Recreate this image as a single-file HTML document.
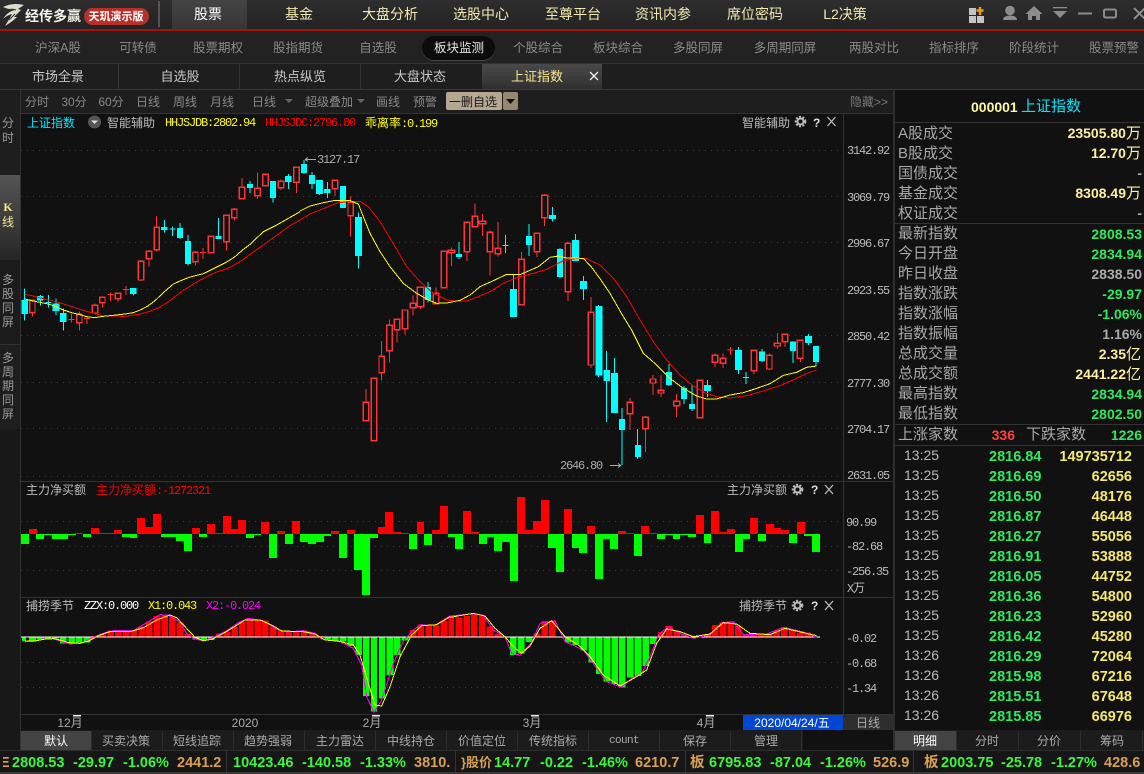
<!DOCTYPE html>
<html><head><meta charset="utf-8"><style>
html,body{margin:0;padding:0;width:1144px;height:774px;overflow:hidden;background:#111}
body{position:relative;font-family:"Liberation Sans","WenQuanYi Zen Hei","Noto Sans CJK SC",sans-serif;font-size:12px;color:#aaa}
.b{position:absolute}
.t{position:absolute;white-space:nowrap;line-height:16px;height:16px;margin-top:1px}
.c{transform:translateX(-50%)}
.r{transform:translateX(-100%)}
.m{font-family:"Liberation Mono","WenQuanYi Zen Hei",monospace;font-size:12px;letter-spacing:-1.2px}
.m i{font-style:normal;font-family:"Liberation Sans","WenQuanYi Zen Hei",sans-serif;letter-spacing:0}
.n{color:#f3e8b0;font-size:14px;margin-top:0}
.s{color:#8a8a8a;font-size:12.500px;margin-top:0}
.tb{color:#c8c8c8;font-size:13px}
.bar{color:#888}
.p{font-size:15px;color:#a8a8a8}
.v{font-size:14px;font-weight:bold;margin-top:0}
.g{color:#30e860}.y{color:#fff0a0}.a{color:#aaa}
.tk{font-size:14.500px;font-weight:bold;top:755px;margin-top:0}
.tg{color:#3cf53c}.to{color:#d8a050}
.x{color:#aaa;font-size:12px;top:732px}
.tm{left:904px;color:#bbb;font-weight:normal}
.pr{left:989px;font-size:14.500px;color:#30e860}
.vo{left:1132px;font-size:14.500px;color:#f5e86a;transform:translateX(-100%)}
svg{position:absolute;left:0;top:0}
.cr{shape-rendering:crispEdges}
</style></head><body>
<div class="b" style="left:0;top:0;width:1144px;height:29px;background:linear-gradient(#2e2e2e,#232323)"></div>
<div class="b" style="left:172px;top:0;width:75px;height:29px;background:linear-gradient(#444,#363636)"></div>
<div class="b" style="left:158px;top:1px;width:2px;height:26px;background:#555"></div>
<div class="b" style="left:0;top:29px;width:1144px;height:2px;background:#a51208"></div>
<div class="b" style="left:0;top:31px;width:1144px;height:32px;background:#222"></div>
<div class="b" style="left:0;top:63px;width:1144px;height:1px;background:#333"></div>
<div class="b" style="left:0;top:64px;width:1144px;height:25px;background:#1e1e1e"></div>
<div class="b" style="left:0;top:89px;width:1144px;height:1px;background:#3a3a3a"></div>
<div class="b" style="left:118px;top:64px;width:1px;height:25px;background:#333"></div>
<div class="b" style="left:239px;top:64px;width:1px;height:25px;background:#333"></div>
<div class="b" style="left:360px;top:64px;width:1px;height:25px;background:#333"></div>
<div class="b" style="left:482px;top:64px;width:120px;height:25px;background:linear-gradient(#4a4a4a,#303030)"></div>
<div class="b" style="left:422px;top:36px;width:73px;height:24px;border-radius:12px;background:#0c0c0c;box-shadow:0 1px 0 #444"></div>
<div class="b" style="left:21px;top:90px;width:873px;height:23px;background:#1e1e1e"></div>
<div class="b" style="left:21px;top:113px;width:873px;height:1px;background:#333"></div>
<div class="b" style="left:0;top:90px;width:20px;height:660px;background:#181818"></div>
<div class="b" style="left:0;top:90px;width:20px;height:85px;background:#1e1e1e"></div>
<div class="b" style="left:0;top:175px;width:20px;height:85px;background:linear-gradient(#555,#262626)"></div>
<div class="b" style="left:0;top:260px;width:20px;height:84px;background:#1c1c1c"></div>
<div class="b" style="left:0;top:344px;width:20px;height:85px;background:#1e1e1e;border-top:1px solid #333;box-sizing:border-box"></div>
<div class="b" style="left:20px;top:90px;width:1px;height:660px;background:#333"></div>
<div class="b" style="left:843px;top:114px;width:1px;height:600px;background:#333"></div>
<div class="b" style="left:893px;top:90px;width:2px;height:660px;background:#2e2e2e"></div>
<div class="b" style="left:21px;top:481px;width:872px;height:1px;background:#333"></div>
<div class="b" style="left:21px;top:597px;width:872px;height:1px;background:#333"></div>
<div class="b" style="left:21px;top:714px;width:872px;height:1px;background:#333"></div>
<div class="b" style="left:895px;top:122px;width:249px;height:1px;background:#333"></div>
<div class="b" style="left:895px;top:223px;width:249px;height:1px;background:#333"></div>
<div class="b" style="left:895px;top:424px;width:249px;height:1px;background:#333"></div>
<div class="b" style="left:895px;top:445px;width:249px;height:1px;background:#333"></div>
<div class="b" style="left:743px;top:715px;width:100px;height:15px;background:#0047d6"></div>
<div class="b" style="left:843px;top:715px;width:50px;height:15px;background:#2e2e2e"></div>
<div class="b" style="left:21px;top:730px;width:782px;height:20px;background:#1c1c1c"></div>
<div class="b" style="left:21px;top:731px;width:70px;height:19px;background:#444"></div>
<div class="b" style="left:895px;top:730px;width:249px;height:20px;background:#1c1c1c"></div>
<div class="b" style="left:895px;top:731px;width:61px;height:19px;background:#444"></div>
<div class="b" style="left:0;top:750px;width:1144px;height:22px;background:#161616;border-top:1px solid #2c2c2c;box-sizing:border-box"></div>
<div class="b" style="left:0;top:772px;width:1144px;height:2px;background:#3a3a3a"></div>
<div class="b" style="left:226px;top:751px;width:1px;height:21px;background:#333"></div>
<div class="b" style="left:455px;top:751px;width:1px;height:21px;background:#333"></div>
<div class="b" style="left:685px;top:751px;width:1px;height:21px;background:#333"></div>
<div class="b" style="left:913px;top:751px;width:1px;height:21px;background:#333"></div>
<div class="b" style="left:91px;top:731px;width:712px;height:19px;background:repeating-linear-gradient(90deg,#2e2e2e 0,#2e2e2e 1px,transparent 1px,transparent 71px)"></div>
<div class="b" style="left:956px;top:731px;width:188px;height:19px;background:repeating-linear-gradient(90deg,#2e2e2e 0,#2e2e2e 1px,transparent 1px,transparent 62px)"></div>

<svg width="1144" height="774" viewBox="0 0 1144 774">
<!-- logo -->
<path d="M3 7C9 4 17 3 24 5L18 9 21 10 14 17 17 17C14 20 10 23 5 26 8 21 10 18 12 14 9 15 6 16 3 19 6 14 10 11 15 10 11 9 7 9 3 7Z" fill="#dcdccc"/>
<path d="M5 11C9 9 13 9 16 10M9 20C11 18 13 16 15 14" stroke="#333" stroke-width="1" fill="none"/>
<rect x="84" y="8" width="65" height="17" rx="8.500" fill="#b8302c"/>
<!-- window icons -->
<g fill="#c4c4c4"><rect x="969" y="8" width="7" height="7"/><rect x="969" y="16" width="7" height="7"/><rect x="977" y="16" width="7" height="7"/></g>
<path d="M980 7v8M976.500 10.500h7" stroke="#f29a10" stroke-width="2.400"/>
<g fill="#8c8c8c"><circle cx="1010" cy="10.500" r="4.800"/><path d="M1003 20c0-3 3-4.500 7-4.500s7 1.500 7 4.500z"/>
<path d="M1034 6l8.500 8H1040v6h-4v-4h-4v4h-4v-6h-2.500z"/>
<rect x="1053" y="7" width="14" height="1.300"/><path d="M1053 11h14l-7 7z"/>
<rect x="1078" y="12.500" width="14" height="2"/></g>
<rect x="1104" y="9.500" width="12" height="8" rx="1.500" fill="none" stroke="#8c8c8c" stroke-width="2"/>
<path d="M1134 8l11 11M1145 8l-11 11" stroke="#8c8c8c" stroke-width="2"/>
<path d="M590 72l8 8M598 72l-8 8" stroke="#eee" stroke-width="1.300"/>
<!-- toolbar arrows -->
<path d="M285 99h8l-4 4z M357 99h8l-4 4z" fill="#666"/>
<rect x="446" y="92" width="56" height="18" rx="2" fill="#b5a792"/>
<rect x="503" y="92" width="15" height="18" rx="2" fill="#96886f"/>
<path d="M506 99h9l-4.500 5z" fill="#111"/>
<circle cx="94.500" cy="122" r="6.500" fill="#555"/><path d="M91 120.500h7l-3.500 3.500z" fill="#ddd"/>
<!-- grids -->
<g stroke="#3a3a3a" stroke-width="1" stroke-dasharray="1 5">
<path d="M21 150.500H842M21 196.500H842M21 242.500H842M21 289.500H842M21 335.500H842M21 382.500H842M21 428.500H842M21 476.500H842M21 521.500H842M21 546.500H842M21 570.500H842M21 662.500H842M21 687.500H842"/>
</g>
<!-- panel 2 bars -->
<g class="cr" transform="translate(0,480) scale(.33333)">
<path fill="#00ff00" d="M63 162H87V192H63zM108 162H132V177H108zM132 162H156V165H132zM156 162H180V177H156zM180 162H204V177H180zM204 162H228V165H204zM249 162H273V171H249zM366 162H390V171H366zM390 162H411V174H390zM483 162H507V171H483zM507 162H528V171H507zM528 162H552V183H528zM552 162H576V213H552zM597 162H621V171H597zM738 162H762V174H738zM762 162H783V165H762zM807 162H831V234H807zM855 162H879V192H855zM900 162H924V186H900zM924 162H948V192H924zM948 162H972V186H948zM972 162H993V168H972zM1017 162H1041V234H1017zM1062 162H1086V270H1062zM1086 162H1110V345H1086zM1110 162H1134V174H1110zM1227 162H1251V207H1227zM1272 162H1296V195H1272zM1344 162H1368V171H1344z"/>
<path fill="#ff0000" d="M87 162V147H111V162zM225 162V159H249V162zM273 162V144H297V162zM297 162V159H321V162zM321 162V159H342V162zM342 162V150H366V162zM411 162V114H435V162zM435 162V141H459V162zM459 162V102H483V162zM576 162V144H600V162zM621 162V132H645V162zM645 162V159H669V162zM669 162V108H693V162zM693 162V147H714V162zM714 162V120H738V162zM783 162V126H807V162zM831 162V153H855V162zM876 162V123H900V162zM993 162V153H1017V162zM1041 162V150H1065V162zM1134 162V141H1155V162zM1155 162V96H1179V162zM1179 162V156H1203V162zM1203 162V159H1227V162zM1251 162V126H1272V162zM1296 162V150H1320V162zM1320 162V78H1344V162z"/>
</g>
<g class="cr" transform="translate(450,480) scale(.33333)">
<path fill="#00ff00" d="M15 162H39V207H15zM87 162H111V192H87zM111 162H132V171H111zM132 162H156V213H132zM156 162H180V186H156zM180 162H204V303H180zM294 162H318V204H294zM318 162H342V276H318zM366 162H387V204H366zM387 162H411V219H387zM435 162H459V297H435zM459 162H480V177H459zM480 162H504V207H480zM552 162H576V228H552zM621 162H645V177H621zM645 162H669V165H645zM669 162H690V177H669zM690 162H714V165H690zM714 162H738V171H714zM762 162H783V189H762zM855 162H879V216H855zM879 162H900V177H879zM924 162H948V183H924zM1017 162H1041V189H1017zM1062 162H1086V168H1062zM1086 162H1110V216H1086z"/>
<path fill="#ff0000" d="M39 162V93H63V162zM63 162V156H87V162zM201 162V51H225V162zM225 162V150H249V162zM249 162V123H273V162zM273 162V60H297V162zM342 162V87H366V162zM411 162V138H435V162zM504 162V153H528V162zM528 162V159H552V162zM573 162V138H597V162zM597 162V159H621V162zM738 162V105H762V162zM783 162V93H807V162zM807 162V156H831V162zM831 162V147H855V162zM900 162V114H924V162zM948 162V132H972V162zM972 162V144H993V162zM993 162V150H1017V162zM1041 162V126H1065V162z"/>
</g>
<!-- panel 3 bars -->
<g class="cr" transform="translate(0,480) scale(.33333)">
<path fill="#00ff00" d="M66 471h12V483H66zM87 471h21V485H87zM110 471h22V478H110zM133 471h20V476H133zM157 471h20V475H157zM180 471h20V490H180zM205 471h20V492H205zM228 471h20V490H228zM250 471h22V487H250zM578 471h20V478H578zM601 471h20V482H601zM624 471h20V480H624zM973 471h20V480H973zM996 471h20V483H996zM1020 471h20V485H1020zM1043 471h20V498H1043zM1066 471h20V525H1066zM1089 471h20V648H1089zM1113 471h18V695H1113zM1137 471h18V655H1137zM1160 471h20V585H1160zM1182 471h20V525H1182zM1205 471h20V481H1205z"/>
<path fill="#ff0000" d="M275 468h20V471H275zM298 460h20V471H298zM322 452h20V471H322zM345 451h20V471H345zM368 451h20V471H368zM391 451h20V471H391zM415 440h20V471H415zM438 425h20V471H438zM461 408h20V471H461zM484 404h20V471H484zM507 410h20V471H507zM530 428h20V471H530zM553 462h22V471H553zM648 460h20V471H648zM671 455h20V471H671zM694 440h20V471H694zM717 425h20V471H717zM740 416h20V471H740zM763 418h20V471H763zM786 422h20V471H786zM810 440h20V471H810zM833 452h20V471H833zM856 455h20V471H856zM879 455h20V471H879zM903 452h20V471H903zM927 458h20V471H927zM950 468h20V471H950zM1230 450h20V471H1230zM1252 433h20V471H1252zM1276 434h20V471H1276zM1299 437h20V471H1299zM1322 421h20V471H1322zM1345 408h5V471H1345z"/>
</g>
<g class="cr" transform="translate(450,480) scale(.33333)">
<path fill="#00ff00" d="M180 471h20V525H180zM204 471h20V520H204zM228 471h20V486H228zM345 471h20V488H345zM368 471h20V495H368zM391 471h20V512H391zM415 471h20V548H415zM438 471h20V582H438zM461 471h20V605H461zM484 471h20V612H484zM507 471h20V622H507zM531 471h20V592H531zM554 471h20V588H554zM577 471h20V558H577zM600 471h20V492H600zM716 471h20V474H716z"/>
<path fill="#ff0000" d="M0 408h12V471H0zM17 412h20V471H17zM40 408h20V471H40zM63 402h20V471H63zM87 408h20V471H87zM110 440h20V471H110zM134 462h20V471H134zM251 460h20V471H251zM274 423h20V471H274zM297 421h20V471H297zM624 456h20V471H624zM647 438h20V471H647zM670 451h20V471H670zM693 464h20V471H693zM739 469h20V471H739zM763 462h20V471H763zM786 435h20V471H786zM809 427h20V471H809zM832 425h20V471H832zM855 436h20V471H855zM878 464h20V471H878zM901 462h20V471H901zM924 460h20V471H924zM947 460h20V471H947zM970 452h20V471H970zM993 441h20V471H993zM1017 450h20V471H1017zM1040 457h20V471H1040zM1063 458h20V471H1063zM1086 465h10V471H1086z"/>
</g>
<path class="cr" d="M21 637H820" stroke="#fff" stroke-width="1"/>
<!-- panel 3 lines -->
<g class="cr" transform="translate(0,480) scale(.33333)" fill="none" stroke-width="3">
<polyline stroke="#ff00ff" points="75,485 100,484 130,477 160,476 185,485 210,492 250,488 280,472 315,458 340,452 400,452 440,428 480,404 505,405 540,427 560,460 580,475 610,483 640,472 680,452 715,428 745,415 790,422 830,448 860,456 910,452 945,460 965,477 1020,485 1060,505 1085,555 1100,650 1122,697 1145,660 1180,550 1210,483 1240,450 1262,434 1305,436 1350,408"/>
<polyline stroke="#ffff00" points="75,483 105,483 130,478 160,476 180,480 205,488 240,490 265,483 300,465 330,455 395,454 430,443 470,420 510,405 530,413 555,440 585,472 610,482 635,478 670,460 700,442 735,420 780,420 815,435 845,453 910,455 945,462 975,480 1020,484 1060,495 1080,525 1105,610 1125,675 1145,678 1170,620 1200,530 1235,465 1265,437 1310,434 1350,410"/>
</g>
<g class="cr" transform="translate(450,480) scale(.33333)" fill="none" stroke-width="3">
<polyline stroke="#ff00ff" points="0,408 70,401 100,406 130,450 165,470 185,520 210,525 245,488 270,430 315,422 345,485 400,510 440,565 470,605 515,622 545,595 575,580 600,530 625,465 655,440 690,460 730,475 780,465 815,428 850,425 880,464 950,462 1000,442 1060,456 1100,473"/>
<polyline stroke="#ffff00" points="0,412 70,400 105,408 135,445 165,470 190,500 215,520 240,498 270,445 305,422 345,470 385,495 420,530 460,585 510,618 560,590 590,570 620,490 650,447 690,455 730,470 780,462 820,428 860,432 900,460 960,464 1005,445 1060,458 1100,467"/>
</g>
<!-- candles left -->
<g class="cr" transform="translate(0,130) scale(.33333)">
<path fill="none" stroke="#00ffff" stroke-width="3.300" d="M74 475V572M121 495V527M145 495V533M136 517H154M168 505V555M190 535V602M400 474V497M493 270V308M517 290V318M508 297H526M540 279V327M564 315V407M656 264V327M750 153V189M819 153V218M865 132V177"/>
<path fill="#00ffff" d="M64 510h20V552h-20zM111 498h20V512h-20zM158 520h20V543h-20zM180 549h20V576h-20zM390 474h20V492h-20zM483 291h20V300h-20zM531 294h18V324h-18zM555 333h18V402h-18zM647 318h18V327h-18zM741 162h18V174h-18zM810 153h18V204h-18zM855 138h20V156h-20z"/>
<path fill="none" stroke="#ff3333" stroke-width="3.300" d="M97 510V560M214 550V578M205 569H223M238 545V602M261 560V582M252 565H270M285 520V550M307 500V533M331 487V513M322 493H340M354 487V515M378 468V495M369 479H387M423 390V453M447 360V410M470 258V365M586 363V407M609 354V387M600 367H618M679 253V362M703 234V272M726 144V207M772 128V207M796 133V170M843 148V180M889 112V189"/>
<path fill="#111" stroke="#ff3333" stroke-width="3.600" d="M89 510h16V548h-16zM230 553h16V578h-16zM277 526h16V549h-16zM299 502h16V518h-16zM346 490h16V506h-16zM415 394h16V450h-16zM439 364h16V386h-16zM463 292h15V359h-15zM578 367h16V395h-16zM625 319h16V368h-16zM671 256h17V335h-17zM695 238h16V263h-16zM718 172h16V206h-16zM764 175h17V197h-17zM788 133h17V167h-17zM835 154h16V173h-16zM881 112h17V157h-17z"/>
<polyline fill="none" stroke="#ff0000" stroke-width="3" points="75,493 100,498 145,510 175,517 210,528 250,541 285,551 310,558 375,559 420,552 450,544 480,531 510,512 540,488 590,456 620,440 650,426 690,412 720,395 750,373 790,345 830,316 870,287 900,270"/>
<polyline fill="none" stroke="#ffff00" stroke-width="3" points="75,507 100,513 145,522 168,530 190,540 215,548 240,554 260,560 285,563 310,559 340,556 375,552 400,548 425,538 445,527 465,512 490,488 520,462 540,453 570,441 610,431 640,416 680,396 705,380 730,358 750,343 790,305 830,285 860,268 900,245"/>
</g>
<!-- candles middle -->
<g class="cr" transform="translate(300,130) scale(.33333)">
<path fill="none" stroke="#00ffff" stroke-width="3.300" d="M12 90V132M36 126V177M59 150V195M82 156V204M129 168V234M175 247V416M384 456V518M477 336V387M617 315V369M608 346H626M640 432V563M687 282V378M757 231V275M780 354V444M826 312V393M850 438V510M896 525V741"/>
<path fill="#00ffff" d="M3 102h18V129h-18zM27 135h18V162h-18zM48 150h21V192h-21zM72 177h20V189h-20zM120 168h18V234h-18zM165 261h21V378h-21zM375 471h18V510h-18zM468 372h18V381h-18zM630 477h21V561h-21zM678 318h18V345h-18zM747 255h21V267h-21zM771 357h18V441h-18zM816 330h21V393h-21zM840 453h21V477h-21zM887 528h20V736h-20z"/>
<path fill="none" stroke="#ff3333" stroke-width="3.300" d="M105 176V198M152 200V320M198 777V872M245 633V752M268 568V698M291 599V638M315 596V614M339 496V557M361 530V537M408 472V524M454 352V408M501 365V393M525 220V293M547 252V318M570 301V437M594 276V380M664 366V390M711 365V381M734 192V288M804 334V513M873 501V714"/>
<path fill="#111" stroke="#ff3333" stroke-width="3.600" d="M97 151h16V176h-16zM144 217h16V257h-16zM190 817h16V872h-16zM214 745h16V932h-16zM237 679h16V728h-16zM260 586h17V662h-17zM283 568h16V599h-16zM307 540h16V596h-16zM331 520h16V533h-16zM352 472h19V530h-19zM400 490h16V521h-16zM424 364h16V473h-16zM445 361h19V368h-19zM493 277h16V365h-16zM517 259h16V290h-16zM538 274h19V281h-19zM562 307h16V365h-16zM586 355h16V371h-16zM656 388h17V524h-17zM703 310h16V365h-16zM725 196h18V263h-18zM796 340h16V485h-16zM865 547h16V705h-16z"/>
<polyline fill="none" stroke="#ff0000" stroke-width="3" points="0,270 30,252 70,236 110,220 140,215 180,214 205,230 240,275 270,325 300,375 320,410 360,455 400,490 440,510 470,513 500,513 530,502 570,485 610,460 650,443 700,430 740,418 790,392 830,385 860,386 900,405"/>
<polyline fill="none" stroke="#ffff00" stroke-width="3" points="0,243 30,228 70,218 100,212 150,212 175,222 190,260 210,310 240,365 270,410 310,460 350,490 385,510 410,520 440,519 480,511 510,495 540,470 580,452 620,433 660,434 715,410 750,382 775,378 800,384 850,385 875,412 900,446"/>
</g>
<!-- candles right -->
<g class="cr" transform="translate(600,130) scale(.33333)">
<path fill="none" stroke="#00ffff" stroke-width="3.300" d="M20 663V876M43 684V849M66 834V1005M113 897V987M207 702V768M252 768V822M276 765V843M322 750V801M415 651V732M438 726V762M429 742H447M486 657V696M579 634V699M625 612V645M648 648V708"/>
<path fill="#00ffff" d="M10 720h20V753h-20zM33 729h21V849h-21zM57 867h18V900h-18zM105 945h18V981h-18zM198 726h18V765h-18zM243 774h18V807h-18zM267 822h18V837h-18zM312 765h21V783h-21zM405 660h21V720h-21zM477 664h18V693h-18zM570 634h18V663h-18zM615 618h21V639h-21zM639 648h18V696h-18z"/>
<path fill="none" stroke="#ff3333" stroke-width="3.300" d="M90 804V900M136 858V966M159 735V795M183 735V801M230 792V861M300 751V866M345 670V711M369 670V714M392 651V675M383 660H401M462 722V732M508 670V720M532 609V657M555 613V651M601 631V696"/>
<path fill="#111" stroke="#ff3333" stroke-width="3.600" d="M82 817h16V851h-16zM128 862h17V896h-17zM151 747h16V759h-16zM175 781h16V789h-16zM221 814h18V827h-18zM292 751h16V863h-16zM337 676h16V697h-16zM361 685h16V700h-16zM454 661h16V722h-16zM500 676h16V717h-16zM523 640h18V648h-18zM547 613h16V635h-16zM592 631h17V685h-17z"/>
<polyline fill="none" stroke="#ff0000" stroke-width="3" points="0,405 40,445 80,500 120,570 160,635 200,690 240,735 280,768 320,790 350,800 390,804 440,797 490,783 540,767 590,745 620,730 650,720"/>
<polyline fill="none" stroke="#ffff00" stroke-width="3" points="0,446 30,490 70,560 95,600 130,670 170,705 210,745 250,775 290,798 320,807 350,807 390,795 430,788 470,775 510,761 550,736 590,727 620,712 650,708"/>
</g>
<!-- arrows of extremes -->
<path d="M305 159.500H316M305 159.500l3-2M305 159.500l3 2M610 465.500H621M621 465.500l-3-2M621 465.500l-3 2" stroke="#aaa" fill="none"/>
<!-- gears, x -->
<g fill="none" stroke="#bbb">
<g stroke-width="2"><circle cx="800.500" cy="121.500" r="3"/><circle cx="797.500" cy="489.500" r="3"/><circle cx="797.500" cy="605.500" r="3"/></g>
<g stroke-width="2" stroke-dasharray="2 1.500"><circle cx="800.500" cy="121.500" r="4.800"/><circle cx="797.500" cy="489.500" r="4.800"/><circle cx="797.500" cy="605.500" r="4.800"/></g>
<path stroke-width="1.300" d="M827.500 117l8 9M835.500 117l-8 9M825 485l8 9M833 485l-8 9M825 601l8 9M833 601l-8 9"/>
</g>
<g fill="#eee"><rect x="73" y="715" width="8" height="1.500"/><rect x="372" y="715" width="8" height="1.500"/><rect x="531" y="715" width="8" height="1.500"/><rect x="706" y="715" width="8" height="1.500"/></g>
</svg>

<!-- header text -->
<span class="t" style="left:25px;top:7px;color:#f2f2e6;font-size:14px;font-weight:bold">经传多赢</span>
<span class="t c" style="left:116px;top:8px;color:#fff;font-size:11px;font-weight:bold">天玑演示版</span>
<span class="t n c" style="left:208px;top:6px;color:#fff">股票</span>
<span class="t n c" style="left:299px;top:6px">基金</span>
<span class="t n c" style="left:390px;top:6px">大盘分析</span>
<span class="t n c" style="left:481px;top:6px">选股中心</span>
<span class="t n c" style="left:573px;top:6px">至尊平台</span>
<span class="t n c" style="left:663px;top:6px">资讯内参</span>
<span class="t n c" style="left:755px;top:6px">席位密码</span>
<span class="t n c" style="left:845px;top:6px">L2决策</span>
<!-- second row -->
<span class="t s c" style="left:58px;top:40px">沪深A股</span>
<span class="t s c" style="left:138px;top:40px">可转债</span>
<span class="t s c" style="left:218px;top:40px">股票期权</span>
<span class="t s c" style="left:298px;top:40px">股指期货</span>
<span class="t s c" style="left:378px;top:40px">自选股</span>
<span class="t s c" style="left:459px;top:40px;color:#e6e6e6">板块监测</span>
<span class="t s c" style="left:538px;top:40px">个股综合</span>
<span class="t s c" style="left:618px;top:40px">板块综合</span>
<span class="t s c" style="left:698px;top:40px">多股同屏</span>
<span class="t s c" style="left:785px;top:40px">多周期同屏</span>
<span class="t s c" style="left:874px;top:40px">两股对比</span>
<span class="t s c" style="left:954px;top:40px">指标排序</span>
<span class="t s c" style="left:1034px;top:40px">阶段统计</span>
<span class="t s c" style="left:1114px;top:40px">股票预警</span>
<!-- tabs -->
<span class="t tb c" style="left:58px;top:68px">市场全景</span>
<span class="t tb c" style="left:180px;top:68px">自选股</span>
<span class="t tb c" style="left:300px;top:68px">热点纵览</span>
<span class="t tb c" style="left:420px;top:68px">大盘状态</span>
<span class="t tb c" style="left:537px;top:68px;color:#f7e68c">上证指数</span>
<!-- toolbar -->
<span class="t bar c" style="left:37px;top:93px">分时</span>
<span class="t bar c" style="left:74px;top:93px">30分</span>
<span class="t bar c" style="left:111px;top:93px">60分</span>
<span class="t bar c" style="left:148px;top:93px">日线</span>
<span class="t bar c" style="left:185px;top:93px">周线</span>
<span class="t bar c" style="left:222px;top:93px">月线</span>
<span class="t bar c" style="left:264px;top:93px">日线</span>
<span class="t bar c" style="left:329px;top:93px">超级叠加</span>
<span class="t bar c" style="left:388px;top:93px">画线</span>
<span class="t bar c" style="left:425px;top:93px">预警</span>
<span class="t c" style="left:473px;top:93px;color:#1a1a1a">一删自选</span>
<span class="t c" style="left:869px;top:93px;color:#777">隐藏&gt;&gt;</span>
<!-- sidebar -->
<span class="t c" style="left:8px;top:114px;color:#999">分</span>
<span class="t c" style="left:8px;top:129px;color:#999">时</span>
<span class="t c" style="left:8px;top:198px;color:#f7e68c;font-weight:bold;font-family:'Liberation Serif',serif">K</span>
<span class="t c" style="left:8px;top:213px;color:#f7e68c">线</span>
<span class="t c" style="left:8px;top:271px;color:#999">多</span>
<span class="t c" style="left:8px;top:285px;color:#999">股</span>
<span class="t c" style="left:8px;top:299px;color:#999">同</span>
<span class="t c" style="left:8px;top:313px;color:#999">屏</span>
<span class="t c" style="left:8px;top:349px;color:#999">多</span>
<span class="t c" style="left:8px;top:363px;color:#999">周</span>
<span class="t c" style="left:8px;top:377px;color:#999">期</span>
<span class="t c" style="left:8px;top:391px;color:#999">同</span>
<span class="t c" style="left:8px;top:405px;color:#999">屏</span>
<!-- chart head -->
<span class="t" style="left:27px;top:114px;color:#00e8ff">上证指数</span>
<span class="t" style="left:107px;top:114px;color:#bbb">智能辅助</span>
<span class="t m" style="left:165px;top:114px;color:#ffff00">HHJSJDB:2802.94</span>
<span class="t m" style="left:265px;top:114px;color:#ff0000">HHJSJDC:2796.80</span>
<span class="t m" style="left:365px;top:114px;color:#ffff00"><i>乖离率</i>:0.199</span>
<span class="t" style="left:742px;top:114px;color:#bbb">智能辅助</span>
<span class="t" style="left:813px;top:114px;color:#ddd;font-weight:bold">?</span>
<span class="t m" style="left:317px;top:151px;color:#aaa">3127.17</span>
<span class="t m" style="left:560px;top:457px;color:#aaa">2646.80</span>
<span class="t m" style="left:847px;top:142px;color:#bbb">3142.92</span>
<span class="t m" style="left:847px;top:189px;color:#bbb">3069.79</span>
<span class="t m" style="left:847px;top:235px;color:#bbb">2996.67</span>
<span class="t m" style="left:847px;top:282px;color:#bbb">2923.55</span>
<span class="t m" style="left:847px;top:328px;color:#bbb">2850.42</span>
<span class="t m" style="left:847px;top:375px;color:#bbb">2777.30</span>
<span class="t m" style="left:847px;top:421px;color:#bbb">2704.17</span>
<span class="t m" style="left:847px;top:467px;color:#bbb">2631.05</span>
<!-- panel 2 -->
<span class="t" style="left:26px;top:481px;color:#bbb">主力净买额</span>
<span class="t m" style="left:96px;top:481px;color:#ff0000"><i>主力净买额</i>:-1272321</span>
<span class="t" style="left:727px;top:481px;color:#bbb">主力净买额</span>
<span class="t" style="left:811px;top:481px;color:#ddd;font-weight:bold">?</span>
<span class="t m" style="left:846px;top:514px;color:#bbb">90.99</span>
<span class="t m" style="left:846px;top:538px;color:#bbb">-82.68</span>
<span class="t m" style="left:846px;top:563px;color:#bbb">-256.35</span>
<span class="t m" style="left:847px;top:579px;color:#bbb">X<i>万</i></span>
<!-- panel 3 -->
<span class="t" style="left:26px;top:597px;color:#bbb">捕捞季节</span>
<span class="t m" style="left:84px;top:597px;color:#fff">ZZX:0.000</span>
<span class="t m" style="left:148px;top:597px;color:#ffff00">X1:0.043</span>
<span class="t m" style="left:206px;top:597px;color:#ff00ff">X2:-0.024</span>
<span class="t" style="left:739px;top:597px;color:#bbb">捕捞季节</span>
<span class="t" style="left:811px;top:597px;color:#ddd;font-weight:bold">?</span>
<span class="t m" style="left:846px;top:630px;color:#bbb">-0.02</span>
<span class="t m" style="left:846px;top:655px;color:#bbb">-0.68</span>
<span class="t m" style="left:846px;top:680px;color:#bbb">-1.34</span>
<!-- date axis -->
<span class="t c" style="left:70px;top:714px;color:#aaa">12月</span>
<span class="t c" style="left:245px;top:714px;color:#aaa">2020</span>
<span class="t c" style="left:372px;top:714px;color:#aaa">2月</span>
<span class="t c" style="left:532px;top:714px;color:#aaa">3月</span>
<span class="t c" style="left:706px;top:714px;color:#aaa">4月</span>
<span class="t c" style="left:792px;top:714px;color:#fff">2020/04/24/五</span>
<span class="t c" style="left:868px;top:714px;color:#aaa">日线</span>
<!-- bottom tabs -->
<span class="t x c" style="left:56px;color:#fff">默认</span>
<span class="t x c" style="left:126px">买卖决策</span>
<span class="t x c" style="left:197px">短线追踪</span>
<span class="t x c" style="left:268px">趋势强弱</span>
<span class="t x c" style="left:340px">主力雷达</span>
<span class="t x c" style="left:411px">中线持仓</span>
<span class="t x c" style="left:482px">价值定位</span>
<span class="t x c" style="left:553px">传统指标</span>
<span class="t x c m" style="left:624px;font-size:11px;letter-spacing:-.6px">count</span>
<span class="t x c" style="left:695px">保存</span>
<span class="t x c" style="left:766px">管理</span>
<span class="t x c" style="left:925px;color:#fff">明细</span>
<span class="t x c" style="left:987px">分时</span>
<span class="t x c" style="left:1049px">分价</span>
<span class="t x c" style="left:1112px">筹码</span>
<!-- ticker -->
<div class="b" style="left:3px;top:752px;width:6px;height:20px;overflow:hidden"><span class="t tk to" style="left:-3px;top:3px">E</span></div>
<span class="t tk tg" style="left:12px">2808.53</span>
<span class="t tk tg" style="left:73px">-29.97</span>
<span class="t tk tg" style="left:123px">-1.06%</span>
<span class="t tk to" style="left:177px">2441.2</span>
<span class="t tk tg" style="left:233px">10423.46</span>
<span class="t tk tg" style="left:302px">-140.58</span>
<span class="t tk tg" style="left:360px">-1.33%</span>
<span class="t tk to" style="left:414px">3810.</span>
<span class="t tk to" style="left:461px;font-size:13px">}股价</span>
<span class="t tk tg" style="left:494px">14.77</span>
<span class="t tk tg" style="left:540px">-0.22</span>
<span class="t tk tg" style="left:582px">-1.46%</span>
<span class="t tk to" style="left:635px">6210.7</span>
<span class="t tk to" style="left:690px">板</span>
<span class="t tk tg" style="left:709px">6795.83</span>
<span class="t tk tg" style="left:770px">-87.04</span>
<span class="t tk tg" style="left:820px">-1.26%</span>
<span class="t tk to" style="left:873px">526.9</span>
<span class="t tk to" style="left:924px">板</span>
<span class="t tk tg" style="left:941px">2003.75</span>
<span class="t tk tg" style="left:1001px">-25.78</span>
<span class="t tk tg" style="left:1051px">-1.27%</span>
<span class="t tk to" style="left:1104px">428.6</span>
<!-- right panel -->
<span class="t v" style="left:971px;top:99px;color:#fdfba0">000001</span>
<span class="t" style="left:1021px;top:98px;color:#00e8ff;font-size:15px">上证指数</span>
<span class="t p" style="left:898px;top:125px">A股成交</span>
<span class="t p" style="left:898px;top:145px">B股成交</span>
<span class="t p" style="left:898px;top:165px">国债成交</span>
<span class="t p" style="left:898px;top:185px">基金成交</span>
<span class="t p" style="left:898px;top:205px">权证成交</span>
<span class="t p" style="left:898px;top:225px">最新指数</span>
<span class="t p" style="left:898px;top:245px">今日开盘</span>
<span class="t p" style="left:898px;top:265px">昨日收盘</span>
<span class="t p" style="left:898px;top:285px">指数涨跌</span>
<span class="t p" style="left:898px;top:305px">指数涨幅</span>
<span class="t p" style="left:898px;top:325px">指数振幅</span>
<span class="t p" style="left:898px;top:345px">总成交量</span>
<span class="t p" style="left:898px;top:365px">总成交额</span>
<span class="t p" style="left:898px;top:385px">最高指数</span>
<span class="t p" style="left:898px;top:405px">最低指数</span>
<span class="t p" style="left:898px;top:426px">上涨家数</span>
<span class="t p" style="left:1026px;top:426px">下跌家数</span>
<span class="t v y r" style="left:1141px;top:125px">23505.80<span style="font-weight:normal;font-size:15px">万</span></span>
<span class="t v y r" style="left:1141px;top:145px">12.70<span style="font-weight:normal;font-size:15px">万</span></span>
<span class="t v a r" style="left:1142px;top:165px">-</span>
<span class="t v y r" style="left:1141px;top:185px">8308.49<span style="font-weight:normal;font-size:15px">万</span></span>
<span class="t v a r" style="left:1142px;top:205px">-</span>
<span class="t v g r" style="left:1142px;top:226px">2808.53</span>
<span class="t v g r" style="left:1142px;top:246px">2834.94</span>
<span class="t v a r" style="left:1142px;top:266px">2838.50</span>
<span class="t v g r" style="left:1142px;top:286px">-29.97</span>
<span class="t v g r" style="left:1142px;top:306px">-1.06%</span>
<span class="t v a r" style="left:1142px;top:326px">1.16%</span>
<span class="t v y r" style="left:1141px;top:346px">2.35<span style="font-weight:normal;font-size:15px">亿</span></span>
<span class="t v y r" style="left:1141px;top:366px">2441.22<span style="font-weight:normal;font-size:15px">亿</span></span>
<span class="t v g r" style="left:1142px;top:386px">2834.94</span>
<span class="t v g r" style="left:1142px;top:406px">2802.50</span>
<span class="t v r" style="left:1015px;top:427px;color:#ff4040">336</span>
<span class="t v g r" style="left:1142px;top:427px">1226</span>
<!-- table -->
<span class="t v tm" style="top:447px">13:25</span><span class="t v pr" style="top:449px">2816.84</span><span class="t v vo" style="top:449px">149735712</span>
<span class="t v tm" style="top:467px">13:25</span><span class="t v pr" style="top:469px">2816.69</span><span class="t v vo" style="top:469px">62656</span>
<span class="t v tm" style="top:487px">13:25</span><span class="t v pr" style="top:489px">2816.50</span><span class="t v vo" style="top:489px">48176</span>
<span class="t v tm" style="top:507px">13:25</span><span class="t v pr" style="top:509px">2816.87</span><span class="t v vo" style="top:509px">46448</span>
<span class="t v tm" style="top:527px">13:25</span><span class="t v pr" style="top:529px">2816.27</span><span class="t v vo" style="top:529px">55056</span>
<span class="t v tm" style="top:547px">13:25</span><span class="t v pr" style="top:549px">2816.91</span><span class="t v vo" style="top:549px">53888</span>
<span class="t v tm" style="top:567px">13:25</span><span class="t v pr" style="top:569px">2816.05</span><span class="t v vo" style="top:569px">44752</span>
<span class="t v tm" style="top:587px">13:25</span><span class="t v pr" style="top:589px">2816.36</span><span class="t v vo" style="top:589px">54800</span>
<span class="t v tm" style="top:607px">13:25</span><span class="t v pr" style="top:609px">2816.23</span><span class="t v vo" style="top:609px">52960</span>
<span class="t v tm" style="top:627px">13:25</span><span class="t v pr" style="top:629px">2816.42</span><span class="t v vo" style="top:629px">45280</span>
<span class="t v tm" style="top:647px">13:26</span><span class="t v pr" style="top:649px">2816.29</span><span class="t v vo" style="top:649px">72064</span>
<span class="t v tm" style="top:667px">13:26</span><span class="t v pr" style="top:669px">2815.98</span><span class="t v vo" style="top:669px">67216</span>
<span class="t v tm" style="top:687px">13:26</span><span class="t v pr" style="top:689px">2815.51</span><span class="t v vo" style="top:689px">67648</span>
<span class="t v tm" style="top:707px">13:26</span><span class="t v pr" style="top:709px">2815.85</span><span class="t v vo" style="top:709px">66976</span>
</body></html>
